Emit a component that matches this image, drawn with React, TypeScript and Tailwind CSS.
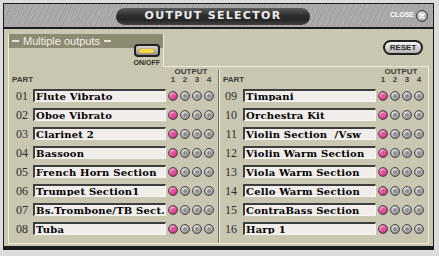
const parts: [string, string][] = [
  ['01', 'Flute Vibrato'],
  ['02', 'Oboe Vibrato'],
  ['03', 'Clarinet 2'],
  ['04', 'Bassoon'],
  ['05', 'French Horn Section'],
  ['06', 'Trumpet Section1'],
  ['07', 'Bs.Trombone/TB Sect.'],
  ['08', 'Tuba'],
  ['09', 'Timpani'],
  ['10', 'Orchestra Kit'],
  ['11', 'Violin Section  /Vsw'],
  ['12', 'Violin Warm Section'],
  ['13', 'Viola Warm Section'],
  ['14', 'Cello Warm Section'],
  ['15', 'ContraBass Section'],
  ['16', 'Harp 1'],
]

function Led({ on }: { on: boolean }) {
  return (
    <span
      className={`w-[10px] h-[10px] rounded-full border border-[#4a4a4a] flex items-center justify-center ${
        on
          ? 'bg-[radial-gradient(circle_at_40%_35%,#ffd6ee,#d8428f_55%,#8a1f55)]'
          : 'bg-[radial-gradient(circle_at_40%_35%,#f4f4f4,#a8a8a8_55%,#606060)]'
      }`}
    >
      <span className={`w-[4px] h-[4px] rounded-full ${on ? 'bg-[#e0509a]' : 'bg-[#8e8e8e]'}`} />
    </span>
  )
}

function Column({ rows, numW, numPad }: { rows: [string, string][]; numW: string; numPad: string }) {
  return (
    <div className="flex flex-col pr-[4px]">
      {/* cabecera */}
      <div className="h-[19px] flex items-end font-['Liberation_Sans'] font-bold text-[#3e3d34] text-[8px] leading-[8px] pb-[2px]">
        <div className={`${numW} pl-[3px]`}>PART</div>
        <div className="w-[133px] mr-[2px]" />
        <div className="flex flex-col items-center w-[46px]">
          <span>OUTPUT</span>
          <div className="flex gap-[2px]">
            {[1, 2, 3, 4].map(n => (
              <span key={n} className="w-[10px] text-center">{n}</span>
            ))}
          </div>
        </div>
      </div>
      {rows.map(([num, name]) => (
        <div key={num} className="h-[19px] flex items-center">
          <div className={`${numW} ${numPad} text-right font-['Liberation_Serif'] text-[12px] text-[#2e2e2a]`}>{num}</div>
          <div className="w-[133px] h-[13px] mr-[2px] bg-[#f1edeb] border-t-2 border-l-2 border-[#3e3e3c] border-b border-r border-b-[#f8f6f0] border-r-[#f8f6f0] flex items-center pl-[1px] overflow-hidden">
            <span className="font-['DejaVu_Serif'] font-bold text-[10px] tracking-[0.2px] leading-[11px] text-black whitespace-pre">{name}</span>
          </div>
          <div className="flex gap-[2px]">
            {[0, 1, 2, 3].map(i => (
              <Led key={i} on={i === 0} />
            ))}
          </div>
        </div>
      ))}
    </div>
  )
}

export default function App() {
  return (
    <div className="w-[439px] h-[256px] bg-[#dcdcdc] pt-[3px] pl-[3px] pr-[5px] pb-[6px]">
      <div className="h-full flex flex-col border-t border-l border-r border-b-4 border-[#1c1c1c]">
        {/* barra de titulo */}
        <div className="h-[25px] flex items-end bg-[#a8a8a8] bg-[repeating-linear-gradient(115deg,#b6b6b6_0px,#9e9e9e_2px,#aeaeae_3px,#a2a2a2_5px)] border-b-2 border-[#1e1e1e]">
          <div className="flex-1" />
          <div className="w-[194px] h-[17px] mb-[2px] mr-[6px] rounded-full bg-[linear-gradient(to_bottom,#5c5c5c,#2c2c2c_45%,#262626_70%,#404040)] flex items-center justify-center font-['DejaVu_Sans'] font-bold text-[11px] tracking-[1.3px] text-[#ececec]">
            OUTPUT SELECTOR
          </div>
          <div className="flex-1 self-stretch flex items-center justify-end pr-[5px] gap-[2px]">
            <span className="font-['Liberation_Sans'] font-bold text-[7px] text-white">CLOSE</span>
            <span className="w-[12px] h-[12px] rounded-full border border-[#3a3a3a] bg-[radial-gradient(circle_at_40%_35%,#e8e8e8,#8a8a8a)] flex items-center justify-center">
              <svg width="6" height="6" viewBox="0 0 6 6">
                <path d="M1 1 L5 5 M5 1 L1 5" stroke="#fff" strokeWidth="1.4" strokeLinecap="round" />
              </svg>
            </span>
          </div>
        </div>

        {/* cuerpo */}
        <div className="flex-1 bg-[#c9c6b2] pl-[4px] pr-[4px] pt-[5px] pb-[2px] flex flex-col">
          <div className="flex h-[33px]">
            <div className="w-[156px] border-l border-r border-[#eeecdf] flex flex-col">
              <div className="h-[14px] bg-[#8d8a73] flex items-center gap-[4px] pl-[3px] font-['Liberation_Sans'] text-[11px] text-[#f3f1e4]">
                <span className="w-[7px] h-[2px] bg-[#e6e4d6]" />
                <span>Multiple outputs</span>
                <span className="w-[7px] h-[2px] bg-[#e6e4d6]" />
              </div>
              <div className="flex justify-end pr-[3px]">
                <div className="flex flex-col items-center -mt-[4px]">
                  <div className="w-[26px] h-[13px] rounded-[4px] border-2 border-[#222] bg-[linear-gradient(to_bottom,#d8d8d8,#8a8a8a)] flex items-center justify-center">
                    <span className="w-[15px] h-[4px] rounded-full bg-[#f3d64a] shadow-[0_0_2px_#c98a10]" />
                  </div>
                  <span className="mt-[2px] font-['Liberation_Sans'] font-bold text-[7px] leading-[8px] text-[#2e2d26]">ON/OFF</span>
                </div>
              </div>
            </div>
            <div className="flex-1 border-b border-[#eeecdf] flex justify-end items-start pt-[6px] pr-[6px]">
              <div className="w-[40px] h-[15px] rounded-full border-2 border-[#202020] bg-[linear-gradient(to_bottom,#f4f4f4,#b4b4b4)] flex items-center justify-center font-['Liberation_Sans'] font-bold text-[8px] text-[#2a2a2a]">
                RESET
              </div>
            </div>
          </div>

          <div className="flex-1 flex border-l border-r border-b border-[#eeecdf]">
            <Column rows={parts.slice(0, 8)} numW="w-[24px]" numPad="pr-[5px]" />
            <div className="w-[2px] mt-[3px] border-l border-[#77756a] bg-[#eeecdf]" />
            <Column rows={parts.slice(8)} numW="w-[23px]" numPad="pr-[6px]" />
          </div>
        </div>
      </div>
    </div>
  )
}
